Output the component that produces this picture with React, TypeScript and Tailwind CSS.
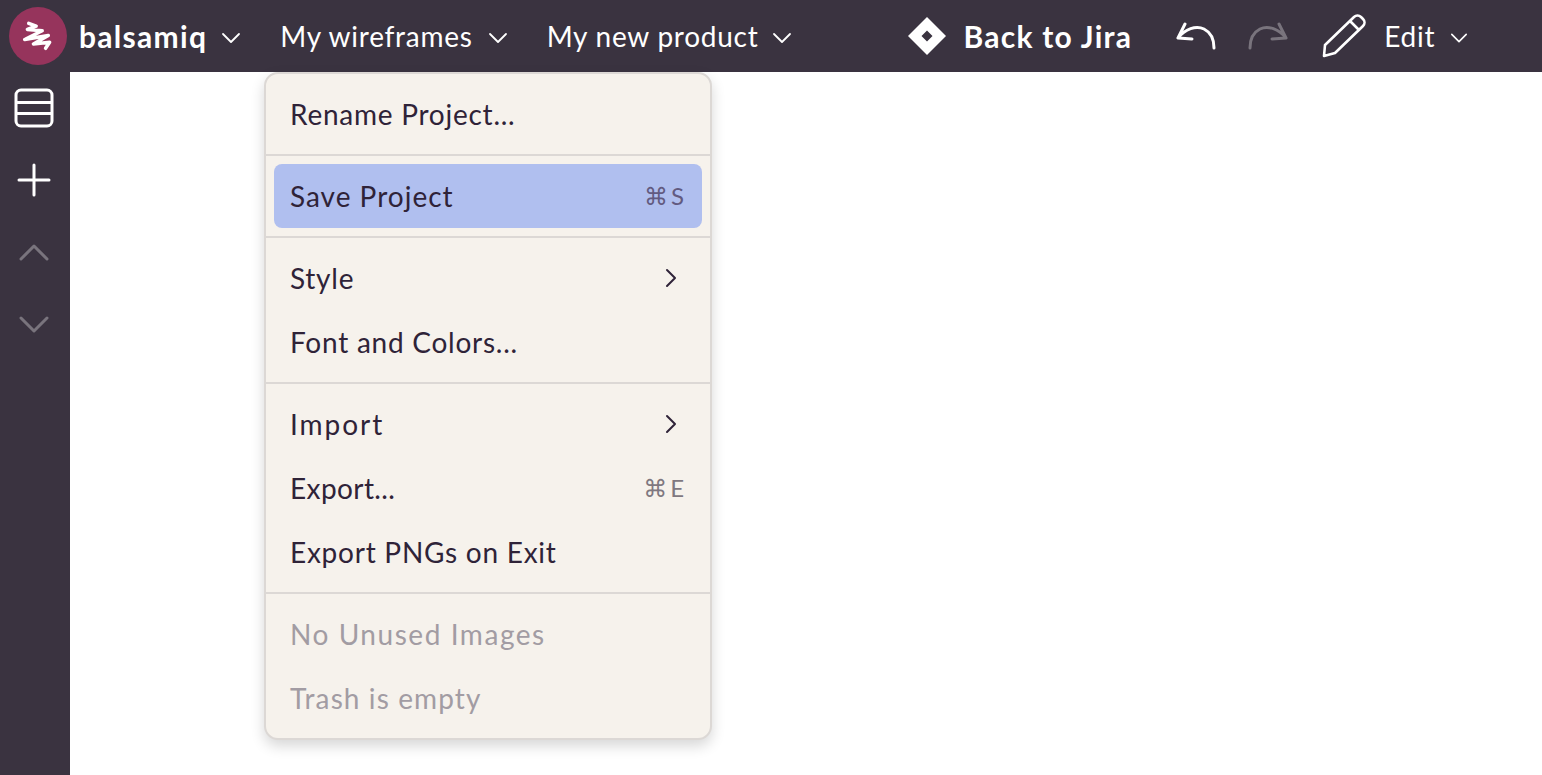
import React from "react";

const font = { fontFamily: '"Lato", "DejaVu Sans", sans-serif' };

function Chevron({ className = "" }: { className?: string }) {
  return (
    <svg viewBox="0 0 20 12" className={`h-[12px] mt-[4px] ${className}`} fill="none" stroke="currentColor" strokeWidth="1.8" strokeLinecap="round" strokeLinejoin="round">
      <path d="M2 2l8 8 8-8" />
    </svg>
  );
}

function Logo() {
  return (
    <div className="w-[58px] h-[58px] rounded-full bg-[#96345c] flex items-center justify-center">
      <svg viewBox="50 42 95 95" className="w-[32px] h-[32px]" fill="none" stroke="white" strokeWidth="10.5" strokeLinecap="round" strokeLinejoin="round">
        <path d="M70 52 L92 60 L66 70 L110 74 L58 100 L128 88 L84 113 L132 108 L120 126" />
      </svg>
    </div>
  );
}

function Item({ label, hint, sub, active, disabled, track = "tracking-[0.75px]" }: { label: string; hint?: string; sub?: boolean; active?: boolean; disabled?: boolean; track?: string }) {
  return (
    <div className={`h-[64px] mx-[8px] px-[16px] rounded-[8px] flex items-center justify-between text-[28px] ${track} ${active ? "bg-[#b0bfef]" : ""} ${disabled ? "text-[#a29ca3]" : "text-[#2f2338]"}`}>
      <span>{label}</span>
      {hint && <span className={`text-[24px] tracking-normal mr-[2px] ${active ? "text-[#625a80]" : "text-[#7f7880]"}`}>{hint}</span>}
      {sub && (
        <svg viewBox="0 0 12 20" className="w-[12px] h-[20px] mr-[9px]" fill="none" stroke="#2f2338" strokeWidth="2" strokeLinecap="round" strokeLinejoin="round">
          <path d="M2 2l8 8-8 8" />
        </svg>
      )}
    </div>
  );
}

function Group({ children, last }: { children: React.ReactNode; last?: boolean }) {
  return <div className={`py-[8px] ${last ? "" : "border-b-2 border-[#dcd8d5]"}`}>{children}</div>;
}

export default function App() {
  return (
    <div className="relative w-[1542px] h-[775px] bg-white overflow-hidden" style={font}>
      <header className="h-[72px] bg-[#3a3340] text-white flex items-center pl-[9px] text-[28px] tracking-[0.75px]">
        <Logo />
        <span className="ml-[12px] text-[30px] font-bold tracking-[1.3px]">balsamiq</span>
        <Chevron className="ml-[14px] w-[20px]" />
        <span className="ml-[39px]">My wireframes</span>
        <Chevron className="ml-[15px] w-[20px]" />
        <span className="ml-[39px]">My new product</span>
        <Chevron className="ml-[13px] w-[20px]" />
        <svg viewBox="0 0 38 38" className="ml-[116px] w-[38px] h-[38px]">
          <path fillRule="evenodd" fill="white" d="M19 0L38 19 19 38 0 19ZM19 13.5L13.5 19 19 24.5 24.5 19Z" />
        </svg>
        <span className="ml-[18px] text-[30px] font-bold tracking-[1.25px]">Back to Jira</span>
        <svg viewBox="0 0 40 30" className="ml-[44px] w-[40px] h-[30px]" fill="none" stroke="white" strokeWidth="3" strokeLinecap="round" strokeLinejoin="round">
          <path d="M9 3L2 17 16 18M2 17C9 8 20 4 28 8 34 11 38 18 38 27" />
        </svg>
        <svg viewBox="0 0 40 30" className="ml-[32px] w-[40px] h-[30px]" fill="none" stroke="#79747d" strokeWidth="3" strokeLinecap="round" strokeLinejoin="round">
          <path d="M31 3L38 17 24 18M38 17C31 8 20 4 12 8 6 11 2 18 2 27" />
        </svg>
        <svg viewBox="0 0 44 44" className="ml-[34px] w-[44px] h-[44px]" fill="none" stroke="white" strokeWidth="2.6" strokeLinecap="round" strokeLinejoin="round">
          <path d="M32 3c2-2 5-2 7 0l2 2c2 2 2 5 0 7L13 39 2 42l1-11ZM28 7l9 9" />
        </svg>
        <span className="ml-[18px]">Edit</span>
        <Chevron className="ml-[15px] w-[18px]" />
      </header>
      <div className="flex h-[703px]">
        <aside className="w-[70px] bg-[#3a3340] flex flex-col items-center pt-[16px]">
          <svg viewBox="0 0 40 40" className="w-[40px] h-[40px] -translate-x-px" fill="none" stroke="white" strokeWidth="3" strokeLinejoin="round">
            <rect x="2" y="2" width="36" height="36" rx="5" />
            <path d="M2 14.5h36M2 25.5h36" />
          </svg>
          <svg viewBox="0 0 34 34" className="mt-[35px] w-[34px] h-[34px] -translate-x-px" fill="none" stroke="white" strokeWidth="3" strokeLinecap="round">
            <path d="M17 2v30M2 17h30" />
          </svg>
          <svg viewBox="0 0 30 18" className="mt-[46px] w-[30px] h-[18px] -translate-x-px" fill="none" stroke="#79747d" strokeWidth="3" strokeLinecap="round" strokeLinejoin="round">
            <path d="M2 16L15 3l13 13" />
          </svg>
          <svg viewBox="0 0 30 18" className="mt-[55px] w-[30px] h-[18px] -translate-x-px" fill="none" stroke="#79747d" strokeWidth="3" strokeLinecap="round" strokeLinejoin="round">
            <path d="M2 2l13 13L28 2" />
          </svg>
        </aside>
      </div>
      <div className="absolute left-[264px] top-[72px] w-[448px] bg-[#f6f2ec] border-2 border-[#dcd8d5] rounded-[14px] shadow-[0_6px_14px_rgba(0,0,0,0.16)]">
        <Group><Item label="Rename Project..." /></Group>
        <Group><Item label="Save Project" hint={"⌘\u2009S"} active track="tracking-[1px]" /></Group>
        <Group>
          <Item label="Style" sub />
          <Item label="Font and Colors..." />
        </Group>
        <Group>
          <Item label="Import" sub track="tracking-[1.95px]" />
          <Item label="Export..." hint={"⌘\u2009E"} track="tracking-[0.4px]" />
          <Item label="Export PNGs on Exit" />
        </Group>
        <Group last>
          <Item label="No Unused Images" disabled track="tracking-[1.55px]" />
          <Item label="Trash is empty" disabled track="tracking-[1.1px]" />
        </Group>
      </div>
    </div>
  );
}
